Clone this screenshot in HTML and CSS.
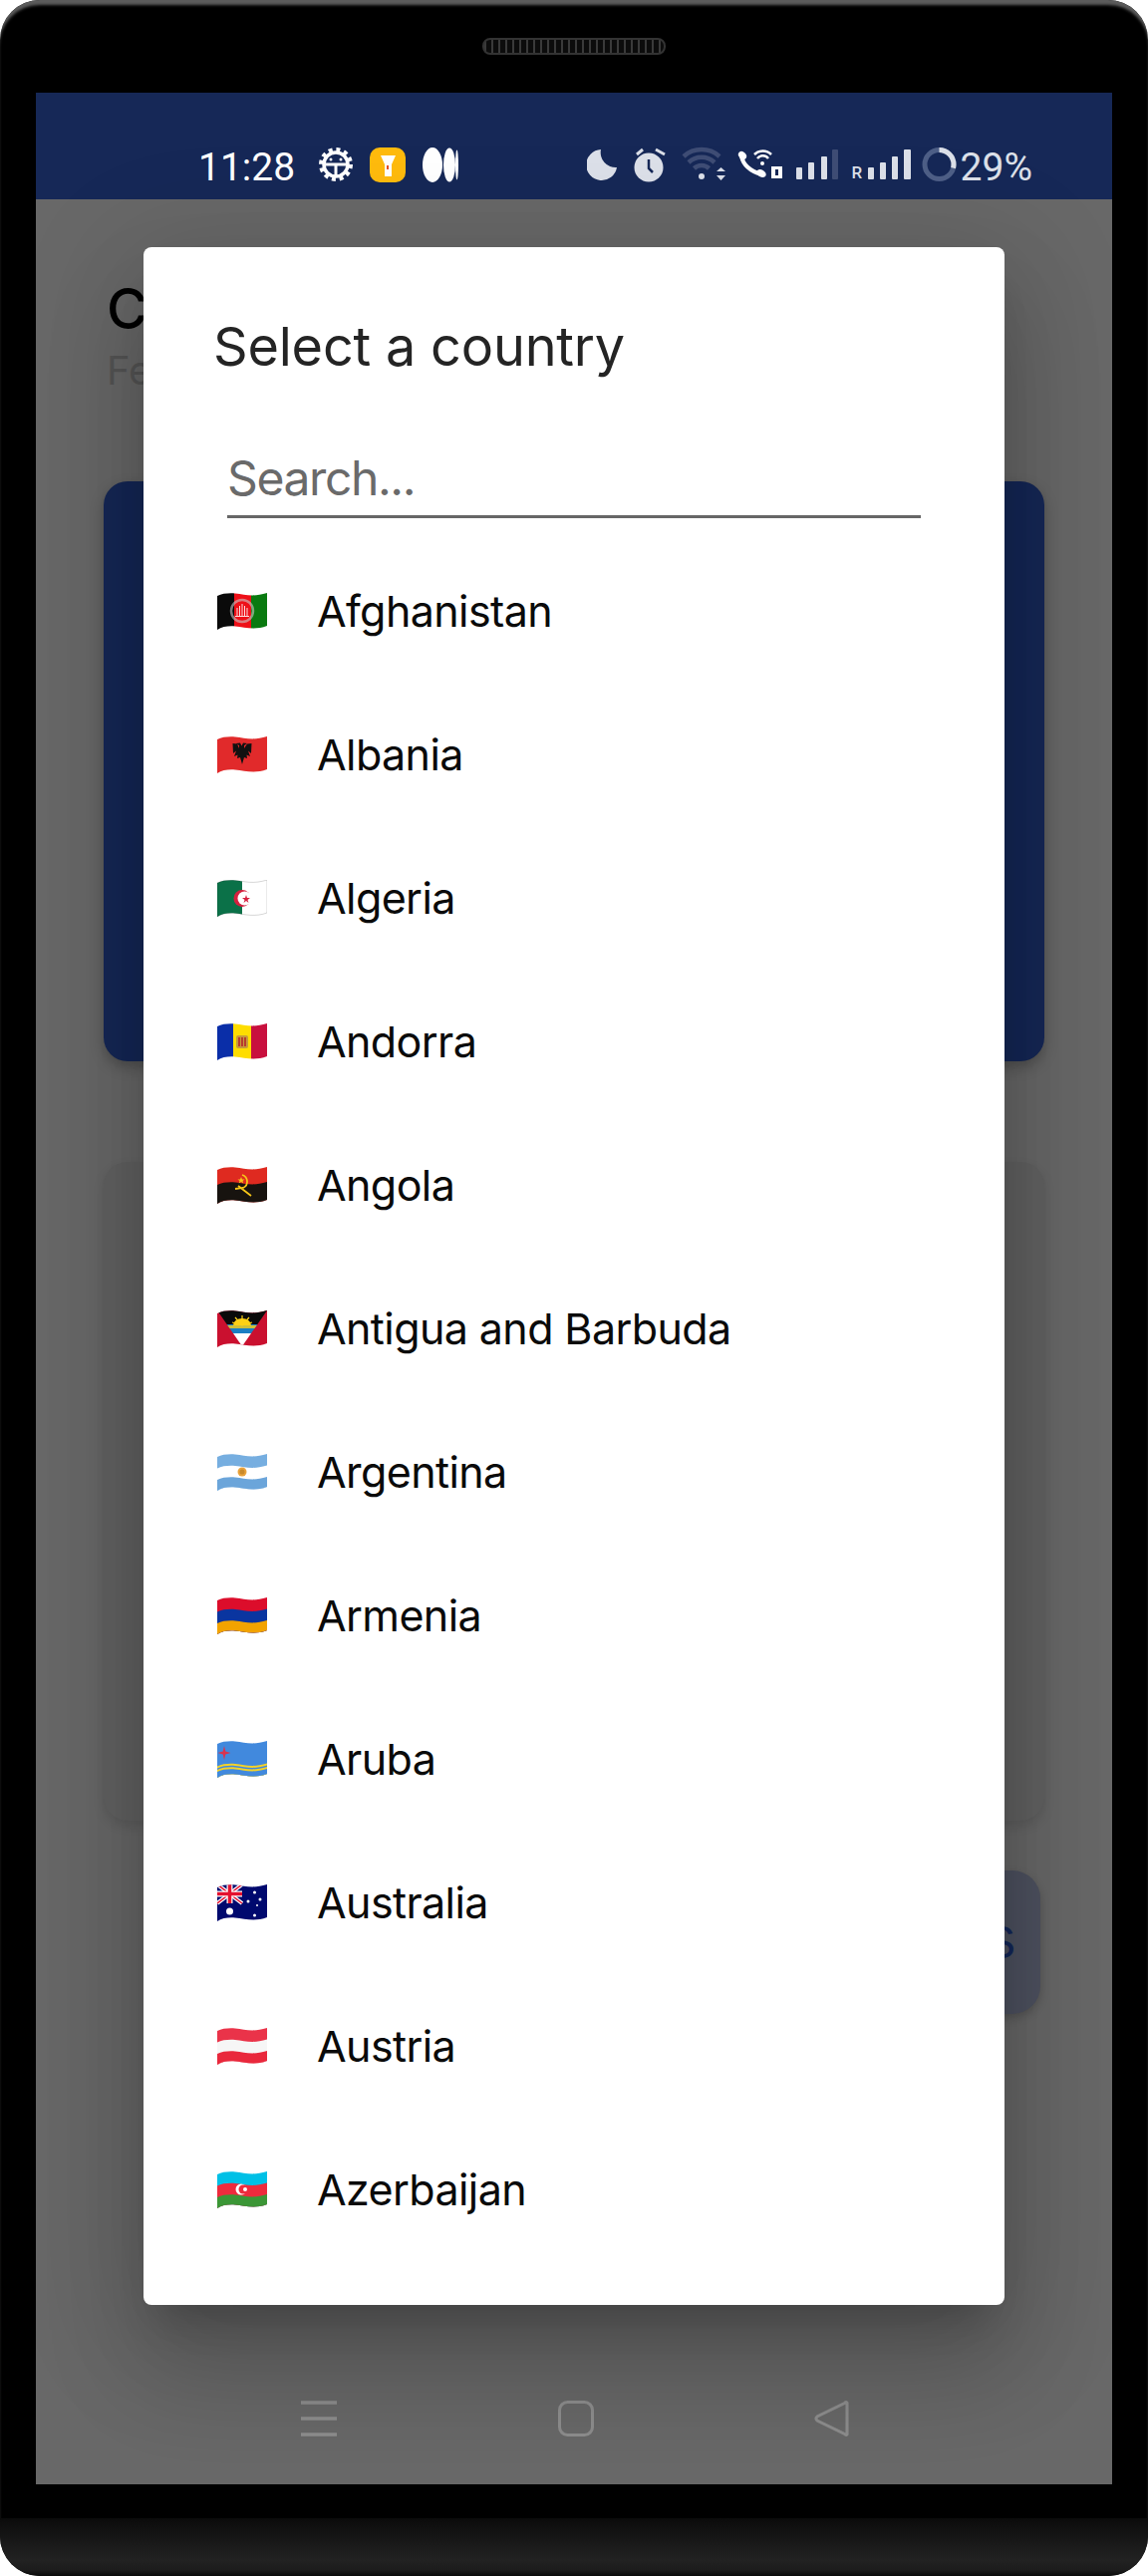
FILE: index.html
```html
<!DOCTYPE html>
<html lang="en">
<head>
    <meta charset="UTF-8">
    <meta name="viewport" content="width=device-width, initial-scale=1.0">
    <title>Select a country</title>
    <link rel="stylesheet" href="styles.css">
</head>
<body>
    <!-- shared flag shapes -->
    <svg class="defs" width="0" height="0">
        <defs>
            <path id="wave" d="M0 3C5 .5 12 0 18 .5C28 1.5 36 4.5 50 0V33C38 37.5 28 34.5 18 33.5C12 33 5 33.5 0 37Z"/>
            <path id="band" d="M0 3C5 .5 12 0 18 .5C28 1.5 36 4.5 50 0V60H0Z"/>
            <clipPath id="wave-clip"><use href="#wave"/></clipPath>
            <clipPath id="vee-clip"><path d="M0 0H50L25 36Z"/></clipPath>
        </defs>
    </svg>

    <div class="phone">
        <div class="bezel-top"><div class="speaker"></div></div>

        <div class="screen">
            <div class="status-bar">
                <div class="status-left">
                    <span class="time">11:28</span>
                    <svg class="icon" width="34" height="40" viewBox="0 0 34 40">
                        <circle cx="17" cy="20" r="15" fill="none" stroke="#fff" stroke-width="4" stroke-dasharray="4 3.85"/>
                        <circle cx="17" cy="20" r="12" fill="none" stroke="#fff" stroke-width="3.5"/>
                        <path d="M6 20H28M17 20V32" stroke="#fff" stroke-width="3"/>
                        <circle cx="12" cy="15" r="1.5" fill="#fff"/>
                        <circle cx="22" cy="15" r="1.5" fill="#fff"/>
                    </svg>
                    <svg class="icon" width="36" height="40" viewBox="0 0 36 40">
                        <rect y="3" width="36" height="35" rx="10" fill="#ffbb0d"/>
                        <path d="M11 11H26L22 20V32H15V20Z" fill="#fff"/>
                        <rect x="17" y="21" width="2" height="4" fill="#e8501f"/>
                    </svg>
                    <svg class="icon" width="36" height="40" viewBox="0 0 36 40" fill="#fff">
                        <ellipse cx="10" cy="20.5" rx="10" ry="17.5"/>
                        <ellipse cx="27" cy="20.5" rx="6" ry="17"/>
                        <ellipse cx="34.5" cy="20.5" rx="1.5" ry="15"/>
                    </svg>
                </div>
                <div class="status-right">
                    <svg class="icon" width="37" height="40" viewBox="0 0 37 40">
                        <path class="soft" d="M14 5A15.5 15.5 0 1 0 30 23A15 15 0 0 1 14 5Z"/>
                    </svg>
                    <svg class="icon" width="38" height="40" viewBox="0 0 38 40">
                        <circle class="soft" cx="15" cy="23" r="14.5"/>
                        <path d="M3 10L9 5M22 5L31 10" stroke="#dce0e9" stroke-width="3"/>
                        <path d="M15 15V24L19 28" fill="none" stroke="#162857" stroke-width="2.5"/>
                    </svg>
                    <svg class="icon" width="45" height="40" viewBox="0 0 45 40">
                        <path d="M2 12A27 27 0 0 1 38 12M7 18A19 19 0 0 1 33 18M12.5 24A11 11 0 0 1 27.5 24" fill="none" stroke="#3f4d75" stroke-width="4.5"/>
                        <circle class="soft" cx="20" cy="32" r="3"/>
                        <path class="soft" d="M35 27L39.5 23L44 27ZM35 31H44L39.5 36Z"/>
                    </svg>
                    <svg class="icon" width="50" height="40" viewBox="0 0 50 40">
                        <path d="M5 12Q8 25 25 30" fill="none" stroke="#fff" stroke-width="4"/>
                        <ellipse cx="6" cy="11" rx="4.5" ry="3.5" fill="#fff" transform="rotate(45 6 11)"/>
                        <ellipse cx="25" cy="29" rx="5" ry="3.5" fill="#fff" transform="rotate(30 25 29)"/>
                        <path d="M18 10A12 12 0 0 1 35 10M21 14A7 7 0 0 1 32 14" fill="none" stroke="#fff" stroke-width="2.5"/>
                        <circle cx="26" cy="19" r="2" fill="#fff"/>
                        <path d="M35 22H46V34H35ZM39 25V31H42V25Z" fill="#fff" fill-rule="evenodd"/>
                    </svg>
                    <svg class="icon" width="46" height="40" viewBox="0 0 46 40">
                        <rect class="soft" x="0" y="23" width="6" height="12" rx="1"/>
                        <rect class="soft" x="12" y="18" width="6" height="17" rx="1"/>
                        <rect class="soft" x="25" y="12" width="6" height="23" rx="1"/>
                        <rect x="36" y="5" width="6" height="30" rx="1" fill="#3f4d75"/>
                    </svg>
                    <div class="sim">
                        <span class="roaming">R</span>
                        <svg class="icon" width="44" height="40" viewBox="0 0 44 40">
                            <rect class="soft" x="0" y="23" width="6" height="12" rx="1"/>
                            <rect class="soft" x="12" y="18" width="6" height="17" rx="1"/>
                            <rect class="soft" x="24" y="12" width="6" height="23" rx="1"/>
                            <rect class="soft" x="36" y="5" width="7" height="30" rx="1"/>
                        </svg>
                    </div>
                    <svg class="icon" width="35" height="40" viewBox="0 0 35 40">
                        <circle cx="17.5" cy="20" r="14.5" fill="none" stroke="#4e5f87" stroke-width="5"/>
                        <circle cx="17.5" cy="20" r="14.5" fill="none" stroke="#dce0e9" stroke-width="5" pathLength="100" stroke-dasharray="29 71" transform="rotate(-90 17.5 20)"/>
                    </svg>
                    <span class="battery">29%</span>
                </div>
            </div>

            <div class="app">
                <h2 class="app-title">C</h2>
                <p class="app-subtitle">Fe</p>
                <div class="card card-blue"></div>
                <div class="card card-plain"></div>
                <div class="app-button">S</div>
            </div>

            <div class="nav-bar">
                <svg class="icon" width="36" height="36" viewBox="0 0 36 36">
                    <path d="M0 2H36M0 18H36M0 34H36" stroke="#8d8d8d" stroke-width="3.5"/>
                </svg>
                <svg class="icon" width="36" height="36" viewBox="0 0 36 36">
                    <rect x="1.5" y="1.5" width="33" height="33" rx="8" fill="none" stroke="#8d8d8d" stroke-width="3"/>
                </svg>
                <svg class="icon" width="36" height="36" viewBox="0 0 36 36">
                    <path d="M33 3.5C33.5 1.5 32 1 30.5 2.5L3 16C1.5 17.5 1.5 18.5 3 20L30.5 33.5C32 35 33.5 34.5 33 32.5Z" fill="none" stroke="#8d8d8d" stroke-width="3"/>
                </svg>
            </div>

            <div class="dialog">
                <h1 class="dialog-title">Select a country</h1>
                <div class="search-field"><span>Search...</span></div>
                <ul class="country-list">
                    <li class="country">
                        <svg class="flag" width="50" height="37" viewBox="0 0 50 37"><g clip-path="url(#wave-clip)">
                            <rect width="17" height="37" fill="#0a0a0a"/><rect x="17" width="17" height="37" fill="#ee1018"/><rect x="34" width="16" height="37" fill="#0a7a10"/>
                            <circle cx="25" cy="18" r="11" fill="none" stroke="#c9c9c9" stroke-width="2.500" opacity=".6"/>
                            <path d="M20 23V15M22.500 23V13M25 23V11M27.500 23V13M30 23V15M18 23.500H32" fill="none" stroke="#fff" stroke-width="1" opacity=".85"/>
                        </g></svg>
                        <span>Afghanistan</span>
                    </li>
                    <li class="country">
                        <svg class="flag" width="50" height="37" viewBox="0 0 50 37"><g clip-path="url(#wave-clip)">
                            <rect width="50" height="37" fill="#e12a2b"/>
                            <path d="M22 9L19 7L23 6.500L24.500 9.500L26 6.500L30 7L27 9L27 12L30 7.500L34.500 7L34 17L31 14.500L33 20L29.500 18.500L30 22L27 21L25 28L23 21L20 22L20.500 18.500L17 20L19 14.500L16 17L15.500 7L20 7.500L22 12Z" fill="#111"/>
                        </g></svg>
                        <span>Albania</span>
                    </li>
                    <li class="country">
                        <svg class="flag" width="50" height="37" viewBox="0 0 50 37"><g clip-path="url(#wave-clip)">
                            <rect width="50" height="37" fill="#fff"/><rect width="25" height="37" fill="#0b7148"/>
                            <circle cx="25" cy="18.500" r="8.500" fill="#d6203f"/><circle cx="27.500" cy="18.500" r="7" fill="#fff"/>
                            <path d="M29 15L30 18L33 18L30.500 20L31.500 23L29 21L26.500 23L27.500 20L25 18L28 18Z" fill="#d6203f"/>
                        </g><use href="#wave" fill="none" stroke="#000" stroke-opacity=".16"/></svg>
                        <span>Algeria</span>
                    </li>
                    <li class="country">
                        <svg class="flag" width="50" height="37" viewBox="0 0 50 37"><g clip-path="url(#wave-clip)">
                            <rect width="16" height="37" fill="#0a2ea8"/><rect x="16" width="18" height="37" fill="#fedd00"/><rect x="34" width="16" height="37" fill="#c8103e"/>
                            <rect x="19" y="12" width="12" height="13" rx="2" fill="#c79a3a"/>
                            <path d="M22 14V23M25 14V23M28 14V23" stroke="#b3252c" stroke-width="1.6"/>
                        </g></svg>
                        <span>Andorra</span>
                    </li>
                    <li class="country">
                        <svg class="flag" width="50" height="37" viewBox="0 0 50 37"><g clip-path="url(#wave-clip)">
                            <rect width="50" height="37" fill="#df2a20"/><use href="#band" y="15" fill="#17130f"/>
                            <path d="M25 8C31 10 32 18 26 21L18 22M21 19L34 29" fill="none" stroke="#f5c518" stroke-width="1.800"/>
                            <path d="M24 10L25 12.500L27.500 12.500L25.500 14L26.300 16.500L24 15L21.700 16.500L22.500 14L20.500 12.500L23 12.500Z" fill="#f5c518"/>
                        </g></svg>
                        <span>Angola</span>
                    </li>
                    <li class="country">
                        <svg class="flag" width="50" height="37" viewBox="0 0 50 37"><g clip-path="url(#wave-clip)">
                            <rect width="50" height="37" fill="#ca102f"/>
                            <g clip-path="url(#vee-clip)">
                                <rect width="50" height="14" fill="#0a0a0a"/><rect y="14" width="50" height="9" fill="#1b7fc4"/><rect y="23" width="50" height="14" fill="#fff"/>
                                <path d="M25 5V15M18 7L25 15M32 7L25 15M15 12L25 15M35 12L25 15" stroke="#fdd116" stroke-width="1.200"/>
                                <path d="M16 15A9 7 0 0 1 34 15Z" fill="#fdd116"/>
                                <rect x="5" y="15" width="40" height="3" fill="#fdd116" opacity=".8"/>
                            </g>
                        </g></svg>
                        <span>Antigua and Barbuda</span>
                    </li>
                    <li class="country">
                        <svg class="flag" width="50" height="37" viewBox="0 0 50 37"><g clip-path="url(#wave-clip)">
                            <rect width="50" height="37" fill="#76aee0"/><use href="#band" y="11.500" fill="#fff"/><use href="#band" y="23" fill="#6ba5da"/>
                            <circle cx="25" cy="18" r="4.500" fill="#e9a23b"/><circle cx="25" cy="18" r="2.500" fill="#c98a2b"/>
                        </g></svg>
                        <span>Argentina</span>
                    </li>
                    <li class="country">
                        <svg class="flag" width="50" height="37" viewBox="0 0 50 37"><g clip-path="url(#wave-clip)">
                            <rect width="50" height="37" fill="#dc0d2b"/><use href="#band" y="11.500" fill="#0a35a0"/><use href="#band" y="23" fill="#f2a300"/>
                        </g></svg>
                        <span>Armenia</span>
                    </li>
                    <li class="country">
                        <svg class="flag" width="50" height="37" viewBox="0 0 50 37"><g clip-path="url(#wave-clip)">
                            <rect width="50" height="37" fill="#4189dd"/>
                            <use href="#band" y="22.500" fill="#f5d327"/><use href="#band" y="24.500" fill="#4189dd"/><use href="#band" y="26" fill="#f5d327"/><use href="#band" y="28" fill="#4189dd"/>
                            <path d="M7 5L8.300 10.500L13.500 12L8.300 13.500L7 19L5.700 13.500L.5 12L5.700 10.500Z" fill="#d8344f"/>
                        </g></svg>
                        <span>Aruba</span>
                    </li>
                    <li class="country">
                        <svg class="flag" width="50" height="37" viewBox="0 0 50 37"><g clip-path="url(#wave-clip)">
                            <rect width="50" height="37" fill="#00096e"/>
                            <path d="M0 0L25 19M25 0L0 19" stroke="#fff" stroke-width="4"/>
                            <path d="M0 0L25 19M25 0L0 19" stroke="#e4112f" stroke-width="1.500"/>
                            <path d="M12.500 0V19M0 9.500H25" stroke="#fff" stroke-width="6"/>
                            <path d="M12.500 0V19M0 9.500H25" stroke="#e4112f" stroke-width="3.500"/>
                            <g fill="#fff">
                                <circle cx="12.500" cy="27" r="3.500"/><circle cx="37.500" cy="8" r="1.500"/><circle cx="31" cy="17" r="1.500"/>
                                <circle cx="43" cy="15" r="1.500"/><circle cx="40" cy="21" r="1"/><circle cx="37.500" cy="31" r="1.500"/>
                            </g>
                        </g></svg>
                        <span>Australia</span>
                    </li>
                    <li class="country">
                        <svg class="flag" width="50" height="37" viewBox="0 0 50 37"><g clip-path="url(#wave-clip)">
                            <rect width="50" height="37" fill="#ea3349"/><use href="#band" y="11.500" fill="#f6f6f6"/><use href="#band" y="23" fill="#e9283c"/>
                        </g></svg>
                        <span>Austria</span>
                    </li>
                    <li class="country">
                        <svg class="flag" width="50" height="37" viewBox="0 0 50 37"><g clip-path="url(#wave-clip)">
                            <rect width="50" height="37" fill="#00c0e6"/><use href="#band" y="11.500" fill="#ee2b3d"/><use href="#band" y="23" fill="#3b9636"/>
                            <circle cx="24" cy="18" r="5.500" fill="#fff"/><circle cx="26" cy="18" r="4.500" fill="#ee2b3d"/><circle cx="28" cy="18" r="2" fill="#fff"/>
                        </g></svg>
                        <span>Azerbaijan</span>
                    </li>
                </ul>
            </div>
        </div>

        <div class="bezel-gap"></div>
        <div class="chin"></div>
    </div>
</body>
</html>
```
FILE: styles.css
```css
* {
    margin: 0;
    padding: 0;
    box-sizing: border-box;
}
body {
    background-color: #fff;
    font-family: 'Inter', 'Liberation Sans', sans-serif;
}
.defs {
    position: absolute;
}
.icon {
    display: block;
    flex: none;
}
.soft {
    fill: #dce0e9;
}

/* device frame */
.phone {
    width: 1152px;
    height: 2585px;
    background-color: #000;
    border-radius: 40px;
    box-shadow: inset 0 6px 3px -1px #5c5c5c;
    overflow: hidden;
    display: flex;
    flex-direction: column;
}
.bezel-top {
    height: 93px;
    flex: none;
    padding-top: 38px;
    display: flex;
    justify-content: center;
}
.speaker {
    width: 184px;
    height: 17px;
    border-radius: 8px;
    border: 2px solid #333;
    background: repeating-linear-gradient(90deg, #3a3a3a 0, #3a3a3a 2px, #0c0c0c 2px, #0c0c0c 7px);
}
.screen {
    position: relative;
    flex: none;
    height: 2400px;
    margin: 0 36px;
    background-color: #686868;
    display: flex;
    flex-direction: column;
}
.bezel-gap {
    height: 34px;
    flex: none;
}
.chin {
    flex: 1;
    background: linear-gradient(180deg, #0b0b0b 0%, #222 72%, #1c1c1c 90%, #0a0a0a 100%);
}

/* status bar */
.status-bar {
    height: 107px;
    flex: none;
    background-color: #162857;
    display: flex;
    justify-content: space-between;
    align-items: flex-end;
    padding: 0 80px 15px 164px;
    font-family: 'Roboto', sans-serif;
}
.status-left, .status-right {
    display: flex;
    align-items: flex-end;
}
.status-left {
    gap: 17px;
}
.status-right {
    gap: 10px;
}
.time {
    font-size: 39px;
    line-height: 40px;
    color: #fff;
    margin: 0 7px -3px -1px;
}
.battery {
    font-size: 39px;
    line-height: 40px;
    color: #dce0e9;
    margin: 0 0 -3px -6px;
}
.sim {
    display: flex;
    align-items: flex-end;
    gap: 6px;
}
.roaming {
    font-size: 17px;
    font-weight: 500;
    line-height: 15px;
    width: 10px;
    color: #dce0e9;
    margin-bottom: 4px;
}

/* page behind the dialog */
.app {
    flex: 1;
    padding: 76px 68px 0;
    color: #000;
}
.app-title {
    font-size: 56px;
    line-height: 68px;
    font-weight: 500;
    padding-left: 3px;
}
.app-subtitle {
    font-size: 40px;
    line-height: 48px;
    color: #555;
    margin-top: 4px;
    padding-left: 3px;
}
.card {
    border-radius: 24px;
}
.card-blue {
    height: 582px;
    margin-top: 87px;
    background-color: #152756;
    box-shadow: 0 6px 14px rgba(0, 0, 0, 0.25);
}
.card-plain {
    height: 661px;
    margin-top: 101px;
    background-color: #626262;
    box-shadow: 0 5px 12px rgba(0, 0, 0, 0.12);
}
.app-button {
    height: 144px;
    margin: 50px 4px 0 240px;
    padding-right: 25px;
    border-radius: 28px;
    background-color: #4e5260;
    box-shadow: 0 4px 10px rgba(0, 0, 0, 0.2);
    color: #14275a;
    font-family: 'Liberation Sans', sans-serif;
    font-size: 46px;
    display: flex;
    justify-content: flex-end;
    align-items: center;
}

/* bottom navigation */
.nav-bar {
    height: 132px;
    flex: none;
    display: flex;
    justify-content: space-between;
    padding: 48px 263px 0 266px;
}

/* dialog */
.dialog {
    position: absolute;
    top: 155px;
    left: 108px;
    width: 864px;
    height: 2065px;
    background-color: #fff;
    border-radius: 8px;
    box-shadow: 0 28px 38px -18px rgba(0, 0, 0, 0.2), 0 62px 98px 8px rgba(0, 0, 0, 0.14), 0 23px 118px 20px rgba(0, 0, 0, 0.12);
}
.dialog-title {
    font-size: 54px;
    line-height: 64px;
    font-weight: 400;
    letter-spacing: -0.2px;
    color: #242424;
    padding: 68px 0 0 70px;
}
.search-field {
    margin: 72px 0 0 84px;
    width: 696px;
    height: 68px;
    border-bottom: 3px solid #666;
    font-size: 48px;
    line-height: 56px;
    letter-spacing: -1.4px;
    color: #6a6a6a;
}
.country-list {
    list-style: none;
    margin-top: 21px;
}
.country {
    height: 144px;
    display: flex;
    align-items: center;
    gap: 50px;
    padding-left: 74px;
    font-size: 43px;
    letter-spacing: -0.6px;
    color: #0a0a0a;
}
.flag {
    flex: none;
}
```
